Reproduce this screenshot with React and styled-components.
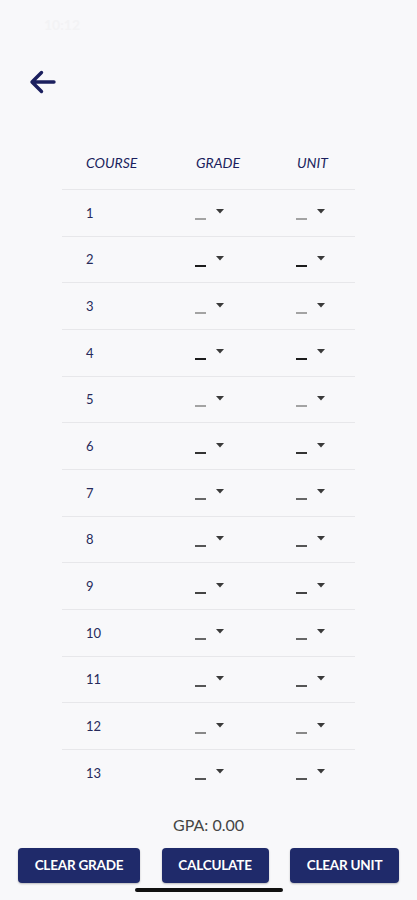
import styled, { createGlobalStyle } from "styled-components";

const GlobalStyle = createGlobalStyle`
  body {
    margin: 0;
    background: #f8f8fa;
    font-family: Lato, "Liberation Sans", sans-serif;
  }
`;

// which rows have the darker placeholder dash in the screenshot
const DASH_TONES = {
  1: "#a3a3a3",
  2: "#1c1c1c",
  3: "#a3a3a3",
  4: "#1c1c1c",
  5: "#a3a3a3",
  6: "#333",
  7: "#666",
  8: "#555",
  9: "#444",
  10: "#666",
  11: "#555",
  12: "#888",
  13: "#555",
};

const courses = Array.from({ length: 13 }, (_, i) => i + 1);

const Dropdown = ({ tone }) => (
  <Select>
    <Dash $tone={tone} />
    <Caret viewBox="0 0 8 5">
      <path d="M0 0 H8 L4 4.5 Z" fill="#3a3a3a" />
    </Caret>
  </Select>
);

const App = () => {
  return (
    <>
      <GlobalStyle />
      <Page>
        <StatusBar>
          <Time>10:12</Time>
        </StatusBar>
        <TopBar>
          <BackButton aria-label="back">
            <svg width="27" height="24" viewBox="0 0 27 24" fill="none">
              <path
                d="M25 12 H3.5 M12.5 2.5 L3 12 L12.5 21.5"
                stroke="#1b1f5e"
                strokeWidth="3.4"
                strokeLinecap="round"
                strokeLinejoin="round"
              />
            </svg>
          </BackButton>
        </TopBar>

        <Table>
          <HeadRow>
            <HeadCell>COURSE</HeadCell>
            <HeadCell>GRADE</HeadCell>
            <HeadCell>UNIT</HeadCell>
          </HeadRow>
          {courses.map((n) => (
            <Row key={n}>
              <Num>{n}</Num>
              <Dropdown tone={DASH_TONES[n]} />
              <Dropdown tone={DASH_TONES[n]} />
            </Row>
          ))}
        </Table>

        <Gpa>GPA: 0.00</Gpa>

        <Actions>
          <ActionButton $w={122}>CLEAR GRADE</ActionButton>
          <ActionButton $w={107}>CALCULATE</ActionButton>
          <ActionButton $w={109}>CLEAR UNIT</ActionButton>
        </Actions>
        <HomeBar />
      </Page>
    </>
  );
};

export default App;

const Page = styled.div`
  width: 417px;
  min-height: 900px;
  display: flex;
  flex-direction: column;
  background: #f8f8fa;
`;

const StatusBar = styled.div`
  height: 48px;
  display: flex;
  align-items: center;
  padding: 0 44px;
`;

const Time = styled.span`
  color: #f3f3f5;
  font-size: 14px;
  font-weight: 700;
`;

const TopBar = styled.div`
  height: 24px;
  margin-top: 22px;
  padding-left: 29px;
  display: flex;
  align-items: center;
`;

const BackButton = styled.button`
  border: none;
  background: none;
  padding: 0;
  display: flex;
  cursor: pointer;
`;

const Table = styled.div`
  margin: 41px 62px 0 62px;
  display: flex;
  flex-direction: column;
`;

const HeadRow = styled.div`
  height: 54px;
  display: grid;
  grid-template-columns: 110px 101px 1fr;
  align-items: center;
  padding-left: 24px;
`;

const HeadCell = styled.span`
  font-style: italic;
  font-size: 14px;
  color: #1b1f5e;
  letter-spacing: 0;
`;

const Row = styled.div`
  box-sizing: border-box;
  height: 46.67px;
  border-top: 1.5px solid #e7e7ea;
  display: grid;
  grid-template-columns: 110px 101px 1fr;
  align-items: center;
  padding-left: 24px;
`;

const Num = styled.span`
  font-size: 13px;
  color: #262a5a;
`;

const Select = styled.div`
  display: inline-flex;
  height: 15px;
  margin-left: -1px;
`;

const Dash = styled.span`
  align-self: flex-end;
  width: 11px;
  height: 2px;
  background: ${(p) => p.$tone};
`;

const Caret = styled.svg`
  width: 8px;
  height: 5px;
  margin-top: 4px;
  margin-left: 10px;
`;

const Gpa = styled.div`
  margin-top: 19px;
  text-align: center;
  font-size: 16px;
  line-height: 20px;
  color: #454545;
`;

const Actions = styled.div`
  margin-top: 13px;
  padding: 0 18px;
  display: flex;
  justify-content: space-between;
`;

const ActionButton = styled.button`
  width: ${(p) => p.$w}px;
  height: 35px;
  border: none;
  border-radius: 4px;
  background: #1f2a6a;
  color: #fff;
  font-family: Lato, "Liberation Sans", sans-serif;
  font-weight: 700;
  font-size: 13.5px;
  letter-spacing: -0.2px;
  box-shadow: 0 1px 2px rgba(0, 0, 0, 0.25);
  padding: 0;
  cursor: pointer;
`;

const HomeBar = styled.div`
  align-self: center;
  width: 148px;
  height: 4px;
  margin-top: 5px;
  border-radius: 2px;
  background: #111;
`;
